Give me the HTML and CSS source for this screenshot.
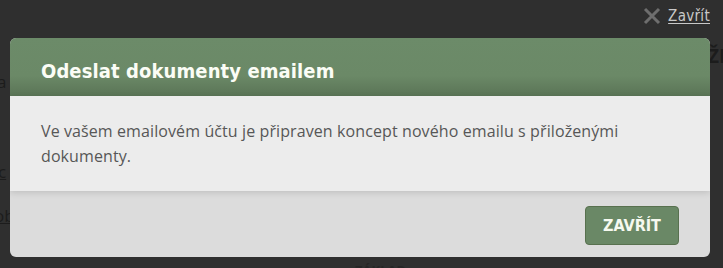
FILE: index.html
```html
<!DOCTYPE html>
<html lang="cs">
<head>
<meta charset="utf-8">
<title>Odeslat dokumenty emailem</title>
<link rel="stylesheet" href="styles.css">
</head>
<body>
<div class="backdrop" aria-hidden="true">
  <span class="ghost g1">a</span>
  <span class="ghost g2">c</span>
  <span class="ghost g3">ob</span>
  <span class="ghost g4">ŽK</span>
  <span class="ghost g5">ZÁKLAD</span>
</div>
<div class="topbar">
  <a class="close-link" href="#">
    <svg class="close-x" width="18" height="18" viewBox="0 0 18 18" aria-hidden="true"><path d="M2 2 L16 16 M16 2 L2 16" stroke="#6e6e6e" stroke-width="3" stroke-linecap="butt"/></svg>
    <span class="close-text">Zavřít</span>
  </a>
</div>
<div class="modal">
  <div class="modal-header">
    <h2 class="modal-title">Odeslat dokumenty emailem</h2>
  </div>
  <div class="modal-body">
    <p>Ve vašem emailovém účtu je připraven koncept nového emailu s přiloženými dokumenty.</p>
  </div>
  <div class="modal-footer">
    <button class="btn" type="button">ZAVŘÍT</button>
  </div>
</div>
</body>
</html>
```

FILE: styles.css
```css
html, body {
  margin: 0;
  padding: 0;
}
body {
  background: #2f2f2f;
  width: 723px;
  height: 268px;
  overflow: hidden;
  position: relative;
  font-family: "Open Sans", "DejaVu Sans", sans-serif;
}
.backdrop {
  position: absolute;
  inset: 0;
  z-index: 0;
}
.ghost {
  position: absolute;
  color: #1c1c1c;
  font-family: "Open Sans", sans-serif;
  font-size: 17px;
}
.g1 { left: -3px; top: 70px; }
.g2 { left: -2px; top: 160px; text-decoration: underline; }
.g3 { left: -6px; top: 204px; text-decoration: underline; }
.g4 { left: 708px; top: 43px; font-weight: 700; font-size: 19px; }
.g5 { left: 355px; top: 261px; font-weight: 700; font-size: 13px; color: #262626; }
.topbar {
  position: relative;
  z-index: 1;
  height: 38px;
  display: flex;
  justify-content: flex-end;
  align-items: flex-start;
  padding-right: 13px;
  box-sizing: border-box;
}
.close-link {
  display: flex;
  align-items: center;
  gap: 7px;
  margin-top: 7px;
  color: #c8c8c8;
  text-decoration: none;
}
.close-x { display: block; }
.close-text {
  font-family: "DejaVu Sans", sans-serif;
  font-stretch: condensed;
  font-size: 15px;
  letter-spacing: 0.3px;
  text-decoration: underline;
  text-underline-offset: 2px;
}
.modal {
  position: relative;
  z-index: 1;
  margin-left: 10px;
  width: 700px;
  height: 219px;
  border-radius: 6px;
  overflow: hidden;
  background: #dcdcdc;
  display: flex;
  flex-direction: column;
}
.modal-header {
  height: 58px;
  background: linear-gradient(to bottom, #6c8b69 0%, #6b8967 65%, #5a7456 100%);
  display: flex;
  align-items: center;
  padding: 0 31px;
  box-sizing: border-box;
}
.modal-title {
  margin: 8px 0 0;
  color: #fbfdf6;
  font-family: "DejaVu Sans", sans-serif;
  font-stretch: condensed;
  font-weight: 700;
  font-size: 20px;
  letter-spacing: 0.1px;
}
.modal-body {
  background: #ececec;
  height: 95px;
  padding: 23px 31px 0;
  box-sizing: border-box;
  box-shadow: 0 2px 6px rgba(0,0,0,0.12);
  position: relative;
  z-index: 1;
}
.modal-body p {
  margin: 0;
  color: #575757;
  font-size: 16px;
  letter-spacing: 0.1px;
  line-height: 25px;
}
.modal-footer {
  flex: 1;
  display: flex;
  justify-content: flex-end;
  align-items: flex-start;
  padding: 15px 31px 0;
}
.btn {
  width: 94px;
  height: 39px;
  background: #6a8866;
  border: 1px solid #58714f;
  border-radius: 4px;
  color: #f6f9ef;
  font-family: "DejaVu Sans", sans-serif;
  font-stretch: condensed;
  font-weight: 700;
  font-size: 16px;
  cursor: pointer;
  padding: 0;
}
```
